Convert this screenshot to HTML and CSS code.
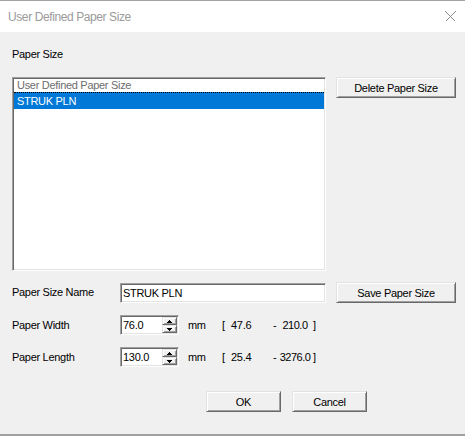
FILE: index.html
```html
<!DOCTYPE html>
<html>
<head>
<meta charset="utf-8">
<title>User Defined Paper Size</title>
<link rel="stylesheet" href="styles.css">
</head>
<body>
<div class="window">
  <div class="titlebar">
    <span class="title">User Defined Paper Size</span>
    <svg class="close" width="11" height="11" viewBox="0 0 11 11">
      <path d="M0.5 0.5 L10.5 10.5 M10.5 0.5 L0.5 10.5" stroke="#8a8a8a" stroke-width="1" fill="none"/>
    </svg>
  </div>
  <div class="content">
    <div class="section-label">Paper Size</div>
    <div class="list-row">
      <div class="listbox">
        <div class="item item-muted">User Defined Paper Size</div>
        <div class="item item-selected">STRUK PLN</div>
      </div>
      <button class="btn btn-side">Delete Paper Size</button>
    </div>
    <div class="row row-name">
      <span class="field-label">Paper Size Name</span>
      <div class="sunken name-box">STRUK PLN</div>
      <button class="btn btn-side btn-save">Save Paper Size</button>
    </div>
    <div class="row row-spin">
      <span class="field-label">Paper Width</span>
      <div class="sunken spinbox">
        <span class="spin-value">76.0</span>
        <span class="spinner">
          <span class="spin-btn"><svg width="5" height="3" viewBox="0 0 5 3"><rect x="2" y="0" width="1" height="1"/><rect x="1" y="1" width="3" height="1"/><rect x="0" y="2" width="5" height="1"/></svg></span>
          <span class="spin-btn"><svg width="5" height="3" viewBox="0 0 5 3"><rect x="0" y="0" width="5" height="1"/><rect x="1" y="1" width="3" height="1"/><rect x="2" y="2" width="1" height="1"/></svg></span>
        </span>
      </div>
      <span class="unit">mm</span>
      <span class="range"><span>[</span><span>47.6</span><span class="dash">-</span><span class="max">210.0</span><span class="close-br">]</span></span>
    </div>
    <div class="row row-spin">
      <span class="field-label">Paper Length</span>
      <div class="sunken spinbox">
        <span class="spin-value">130.0</span>
        <span class="spinner">
          <span class="spin-btn"><svg width="5" height="3" viewBox="0 0 5 3"><rect x="2" y="0" width="1" height="1"/><rect x="1" y="1" width="3" height="1"/><rect x="0" y="2" width="5" height="1"/></svg></span>
          <span class="spin-btn"><svg width="5" height="3" viewBox="0 0 5 3"><rect x="0" y="0" width="5" height="1"/><rect x="1" y="1" width="3" height="1"/><rect x="2" y="2" width="1" height="1"/></svg></span>
        </span>
      </div>
      <span class="unit">mm</span>
      <span class="range"><span>[</span><span>25.4</span><span class="dash">-</span><span class="max">3276.0</span><span class="close-br">]</span></span>
    </div>
    <div class="actions">
      <button class="btn btn-action">OK</button>
      <button class="btn btn-action">Cancel</button>
    </div>
  </div>
</div>
</body>
</html>
```
FILE: styles.css
```css
html, body {
  margin: 0;
  padding: 0;
}
body {
  width: 465px;
  height: 436px;
  overflow: hidden;
  background: #f0f0f0;
  font-family: "Liberation Sans", Arial, sans-serif;
  font-size: 11px;
  letter-spacing: -0.3px;
  color: #000;
}
.window {
  width: 465px;
  height: 436px;
  box-sizing: border-box;
  border-top: 1px solid #a3a3a3;
  display: flex;
  flex-direction: column;
}
.titlebar {
  height: 31px;
  flex: none;
  background: #fff;
  display: flex;
  align-items: center;
  justify-content: space-between;
  padding: 0 9px 0 8px;
}
.title {
  font-size: 12px;
  letter-spacing: -0.4px;
  color: #9a9a9a;
}
.close {
  display: block;
  shape-rendering: crispEdges;
}
.content {
  flex: 1;
  box-sizing: border-box;
  border-bottom: 2px solid #a0a0a0;
  padding: 16px 0 0 12px;
  display: flex;
  flex-direction: column;
}
.section-label {
  line-height: 13px;
  height: 13px;
}
.list-row {
  margin-top: 16px;
  display: flex;
  align-items: flex-start;
  gap: 10px;
}
.listbox {
  width: 314px;
  height: 194px;
  box-sizing: border-box;
  background: #fff;
  border: 1px solid;
  border-color: #a0a0a0 #fff #fff #a0a0a0;
  box-shadow: inset 1px 1px #696969, inset -1px -1px #e3e3e3;
  padding: 1px;
}
.item {
  padding-left: 3px;
  line-height: 13px;
  height: 13px;
  white-space: nowrap;
}
.item-muted {
  color: #6d6d6d;
}
.item-selected {
  height: 16px;
  line-height: 16px;
  background: #0078d7;
  color: #fff;
  border-top: 1px dotted #000;
}
.btn {
  box-sizing: border-box;
  height: 21px;
  margin: 0;
  padding: 0;
  font: inherit;
  letter-spacing: inherit;
  color: #000;
  background: #f0f0f0;
  border: 1px solid;
  border-color: #e3e3e3 #696969 #696969 #e3e3e3;
  box-shadow: inset 1px 1px #fff, inset -1px -1px #a0a0a0;
  text-align: center;
}
.btn-side {
  width: 120px;
  flex: none;
}
.row {
  display: flex;
  align-items: center;
}
.row-name {
  margin-top: 11px;
  height: 21px;
}
.row-spin {
  margin-top: 12px;
  height: 20px;
}
.field-label {
  width: 108px;
  flex: none;
  line-height: 13px;
  white-space: nowrap;
}
.sunken {
  box-sizing: border-box;
  background: #fff;
  border: 1px solid;
  border-color: #a0a0a0 #fff #fff #a0a0a0;
  box-shadow: inset 1px 1px #696969, inset -1px -1px #e3e3e3;
  padding: 1px;
}
.name-box {
  width: 206px;
  height: 20px;
  line-height: 16px;
  padding-left: 2px;
  margin-right: 10px;
  white-space: nowrap;
}
.spinbox {
  width: 59px;
  height: 20px;
  display: flex;
  justify-content: space-between;
}
.spin-value {
  padding-left: 1px;
  line-height: 16px;
}
.spinner {
  width: 15px;
  height: 16px;
  display: flex;
  flex-direction: column;
}
.spin-btn {
  box-sizing: border-box;
  height: 8px;
  background: #f0f0f0;
  border: 1px solid;
  border-color: #e3e3e3 #696969 #696969 #e3e3e3;
  box-shadow: inset 1px 1px #fff, inset -1px -1px #a0a0a0;
  display: flex;
  align-items: center;
  justify-content: center;
}
.spin-btn svg {
  display: block;
  fill: #000;
  shape-rendering: crispEdges;
}
.unit {
  width: 34px;
  margin-left: 9px;
  flex: none;
}
.range {
  display: grid;
  grid-template-columns: 9px 42px 5px 34px auto;
  white-space: nowrap;
}
.max {
  justify-self: center;
  letter-spacing: -0.5px;
}
.close-br {
  margin-left: 1px;
}
.actions {
  margin-top: 24px;
  padding-left: 194px;
  display: flex;
  gap: 11px;
}
.btn-action {
  width: 75px;
}
```
